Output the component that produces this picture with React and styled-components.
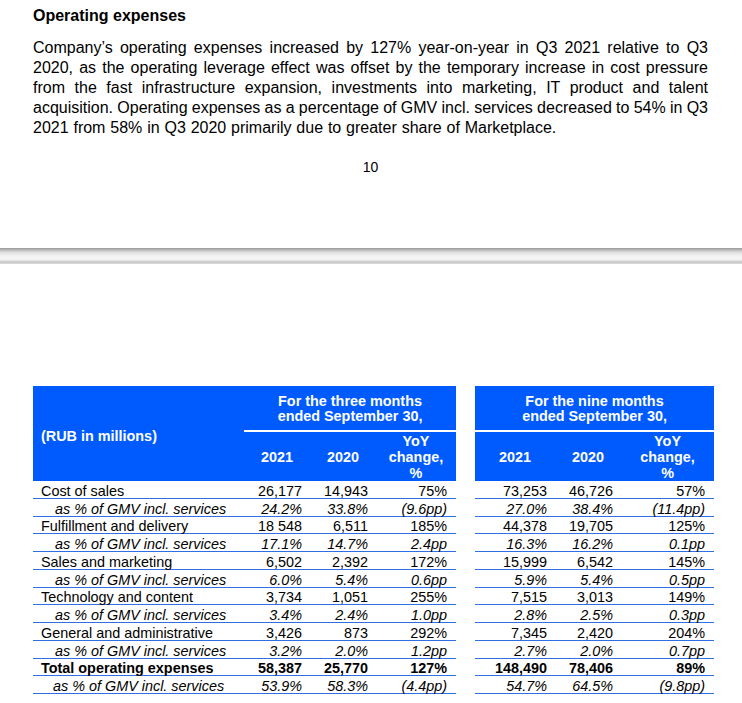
import styled, { createGlobalStyle } from "styled-components";

const GlobalStyle = createGlobalStyle`
  html, body {
    margin: 0;
    padding: 0;
    background: #fff;
  }
  body {
    font-family: "Liberation Sans", Arial, sans-serif;
    color: #000;
  }
`;

const BLUE = "#005bff";
const RULE = "#2f6fe6";

const Page = styled.div`
  width: 742px;
  height: 703px;
  overflow: hidden;
`;

const TextBlock = styled.section`
  padding: 6px 34px 0 33px;
`;

const Heading = styled.h2`
  margin: 0;
  font-size: 16px;
  line-height: 20px;
  font-weight: bold;
`;

const Paragraph = styled.p`
  margin: 12px 0 0;
  font-size: 16px;
  line-height: 20px;
`;

const Line = styled.span`
  display: block;
  white-space: nowrap;
  text-align: ${(p) => (p.$last ? "left" : "justify")};
  text-align-last: ${(p) => (p.$last ? "left" : "justify")};
  word-spacing: ${(p) => (p.$last ? "0.4px" : "-0.4px")};
`;

const PageNumber = styled.div`
  margin-top: 19px;
  text-align: center;
  font-size: 14px;
  line-height: 20px;
`;

const PageBreak = styled.div`
  margin-top: 71px;
  height: 16px;
  background: linear-gradient(
    to bottom,
    #999 0,
    #b9b9b9 2px,
    #dcdcdc 4px,
    #efefef 7px,
    #f6f6f6 10px,
    #f2f2f2 12px,
    #d2d2d2 13px,
    #cacaca 15px,
    #e6e6e6 16px
  );
`;

const TableWrap = styled.section`
  padding: 122px 0 0 33px;
`;

const Table = styled.table`
  border-collapse: separate;
  border-spacing: 0;
  table-layout: fixed;
  width: 681px;
  font-size: 14.4px;
`;

const HeadCell = styled.th`
  background: ${BLUE};
  color: #fff;
  font-weight: bold;
  padding: 0;
`;

const LabelHead = styled(HeadCell)`
  text-align: left;
  padding: 4px 0 0 8px;
  vertical-align: middle;
  line-height: 16px;
`;

const GroupHead = styled(HeadCell)`
  height: 43px;
  text-align: center;
  vertical-align: middle;
  line-height: 15px;
  padding-top: 1px;
  border-bottom: 2px solid #fff;
`;

const ColHead = styled(HeadCell)`
  height: 49px;
  text-align: center;
  vertical-align: middle;
  line-height: 16px;
`;

const Gap = styled.td`
  padding: 0;
  background: #fff;
`;

const DataRow = styled.tr`
  height: 17.75px;
  font-style: ${(p) => (p.$sub ? "italic" : "normal")};
  font-weight: ${(p) => (p.$bold ? "bold" : "normal")};
`;

const LabelCell = styled.td`
  padding: 0 0 0 ${(p) => p.$indent}px;
  text-align: left;
  vertical-align: bottom;
  line-height: 14px;
  white-space: nowrap;
  border-bottom: 1px solid ${RULE};
`;

const NumCell = styled.td`
  padding: 0 ${(p) => (p.$yoy ? 9 : 8)}px 0 0;
  text-align: right;
  vertical-align: bottom;
  line-height: 14px;
  white-space: nowrap;
  border-bottom: 1px solid ${RULE};
`;

const SUB = "as % of GMV incl. services";

const rows = [
  { label: "Cost of sales", v: ["26,177", "14,943", "75%", "73,253", "46,726", "57%"] },
  { sub: true, v: ["24.2%", "33.8%", "(9.6pp)", "27.0%", "38.4%", "(11.4pp)"] },
  { label: "Fulfillment and delivery", v: ["18 548", "6,511", "185%", "44,378", "19,705", "125%"] },
  { sub: true, v: ["17.1%", "14.7%", "2.4pp", "16.3%", "16.2%", "0.1pp"] },
  { label: "Sales and marketing", v: ["6,502", "2,392", "172%", "15,999", "6,542", "145%"] },
  { sub: true, v: ["6.0%", "5.4%", "0.6pp", "5.9%", "5.4%", "0.5pp"] },
  { label: "Technology and content", v: ["3,734", "1,051", "255%", "7,515", "3,013", "149%"] },
  { sub: true, v: ["3.4%", "2.4%", "1.0pp", "2.8%", "2.5%", "0.3pp"] },
  { label: "General and administrative", v: ["3,426", "873", "292%", "7,345", "2,420", "204%"] },
  { sub: true, v: ["3.2%", "2.0%", "1.2pp", "2.7%", "2.0%", "0.7pp"] },
  { label: "Total operating expenses", bold: true, v: ["58,387", "25,770", "127%", "148,490", "78,406", "89%"] },
  { sub: true, last: true, v: ["53.9%", "58.3%", "(4.4pp)", "54.7%", "64.5%", "(9.8pp)"] },
];

const paragraph = [
  "Company’s operating expenses increased by 127% year-on-year in Q3 2021 relative to Q3",
  "2020, as the operating leverage effect was offset by the temporary increase in cost pressure",
  "from the fast infrastructure expansion, investments into marketing, IT product and talent",
  "acquisition. Operating expenses as a percentage of GMV incl. services decreased to 54% in Q3",
  "2021 from 58% in Q3 2020 primarily due to greater share of Marketplace.",
];

const Values = ({ values }) => (
  <>
    {values.slice(0, 3).map((val, i) => (
      <NumCell key={`a${i}`} $yoy={i === 2}>
        {val}
      </NumCell>
    ))}
    <Gap />
    {values.slice(3).map((val, i) => (
      <NumCell key={`b${i}`} $yoy={i === 2}>
        {val}
      </NumCell>
    ))}
  </>
);

const YoyHead = () => (
  <ColHead>
    YoY
    <br />
    change,
    <br />%
  </ColHead>
);

const App = () => (
  <Page>
    <GlobalStyle />
    <TextBlock>
      <Heading>Operating expenses</Heading>
      <Paragraph>
        {paragraph.map((line, i) => (
          <Line key={i} $last={i === paragraph.length - 1}>
            {line}
          </Line>
        ))}
      </Paragraph>
      <PageNumber>10</PageNumber>
    </TextBlock>
    <PageBreak />
    <TableWrap>
      <Table>
        <colgroup>
          <col style={{ width: 211 }} />
          <col style={{ width: 66 }} />
          <col style={{ width: 66 }} />
          <col style={{ width: 80 }} />
          <col style={{ width: 19 }} />
          <col style={{ width: 80 }} />
          <col style={{ width: 66 }} />
          <col style={{ width: 93 }} />
        </colgroup>
        <thead>
          <tr>
            <LabelHead rowSpan={2}>(RUB in millions)</LabelHead>
            <GroupHead colSpan={3}>
              For the three months
              <br />
              ended September 30,
            </GroupHead>
            <Gap rowSpan={2} />
            <GroupHead colSpan={3}>
              For the nine months
              <br />
              ended September 30,
            </GroupHead>
          </tr>
          <tr>
            <ColHead>2021</ColHead>
            <ColHead>2020</ColHead>
            <YoyHead />
            <ColHead>2021</ColHead>
            <ColHead>2020</ColHead>
            <YoyHead />
          </tr>
        </thead>
        <tbody>
          {rows.map((row, i) => (
            <DataRow key={i} $sub={row.sub} $bold={row.bold}>
              <LabelCell $indent={row.sub ? (row.last ? 20 : 22) : 8}>
                {row.sub ? SUB : row.label}
              </LabelCell>
              <Values values={row.v} />
            </DataRow>
          ))}
        </tbody>
      </Table>
    </TableWrap>
  </Page>
);

export default App;
